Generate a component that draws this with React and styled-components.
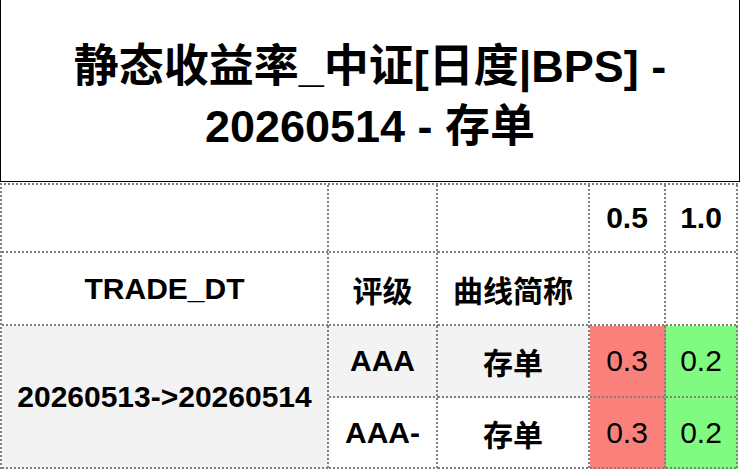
import React from "react";
import styled, { createGlobalStyle } from "styled-components";

const Global = createGlobalStyle`
  html, body { margin: 0; padding: 0; background: #ffffff; }
  body { font-family: "Liberation Sans", "Noto Sans CJK SC", Arial, sans-serif; color: #000; }
`;

const DOT = "#808080";
const vDots = `repeating-linear-gradient(to bottom, ${DOT} 0 2px, transparent 2px 4px)`;
const hDots = `repeating-linear-gradient(to right, ${DOT} 0 2px, transparent 2px 4px)`;

const Page = styled.div`
  width: 740px;
  display: flex;
  flex-direction: column;
  gap: 1px;
`;

const TitleBox = styled.div`
  margin-top: -1px;
  width: 740px;
  height: 183px;
  box-sizing: border-box;
  border: 1px solid #000;
  padding-top: 12px;
  display: flex;
  align-items: center;
  justify-content: center;
  text-align: center;
`;

const Title = styled.h1`
  margin: 0;
  padding: 0 50px;
  font-size: 45px;
  line-height: 60px;
  font-weight: 700;
  font-family: "Liberation Sans", "Noto Sans CJK SC", Arial, sans-serif;
`;

const Grid = styled.div`
  display: grid;
  grid-template-columns: 327px 109px 152px 76px 72px;
  grid-template-rows: 68px 73px 72px 71px;
  width: max-content;
  padding: 2px 0 0 2px;
  background: ${vDots} left top / 2px 100% no-repeat, ${hDots} left top / 100% 2px no-repeat;
`;

const Cell = styled.div`
  box-sizing: border-box;
  padding: 0 2px 2px 0;
  display: flex;
  align-items: center;
  justify-content: center;
  font-size: 30px;
  font-weight: ${(p) => (p.$regular ? 400 : 700)};
  background: ${vDots} right top / 2px 100% no-repeat,
    ${hDots} left bottom / 100% 2px no-repeat,
    ${(p) => p.$bg || "#ffffff"};
  grid-row: ${(p) => (p.$rowSpan ? `span ${p.$rowSpan}` : "auto")};
  white-space: nowrap;
`;

const RED = "#fa807b";
const GREEN = "#80fa80";
const GREY = "#f3f3f3";

export default function App() {
  return (
    <>
      <Global />
      <Page>
        <TitleBox>
          <Title>静态收益率_中证[日度|BPS] - 20260514 - 存单</Title>
        </TitleBox>
        <Grid>
          <Cell />
          <Cell />
          <Cell />
          <Cell>0.5</Cell>
          <Cell>1.0</Cell>

          <Cell>TRADE_DT</Cell>
          <Cell>评级</Cell>
          <Cell>曲线简称</Cell>
          <Cell />
          <Cell />

          <Cell $rowSpan={2} $bg={GREY}>20260513-&gt;20260514</Cell>
          <Cell $bg={GREY}>AAA</Cell>
          <Cell $bg={GREY}>存单</Cell>
          <Cell $bg={RED} $regular>0.3</Cell>
          <Cell $bg={GREEN} $regular>0.2</Cell>

          <Cell>AAA-</Cell>
          <Cell>存单</Cell>
          <Cell $bg={RED} $regular>0.3</Cell>
          <Cell $bg={GREEN} $regular>0.2</Cell>
        </Grid>
      </Page>
    </>
  );
}
